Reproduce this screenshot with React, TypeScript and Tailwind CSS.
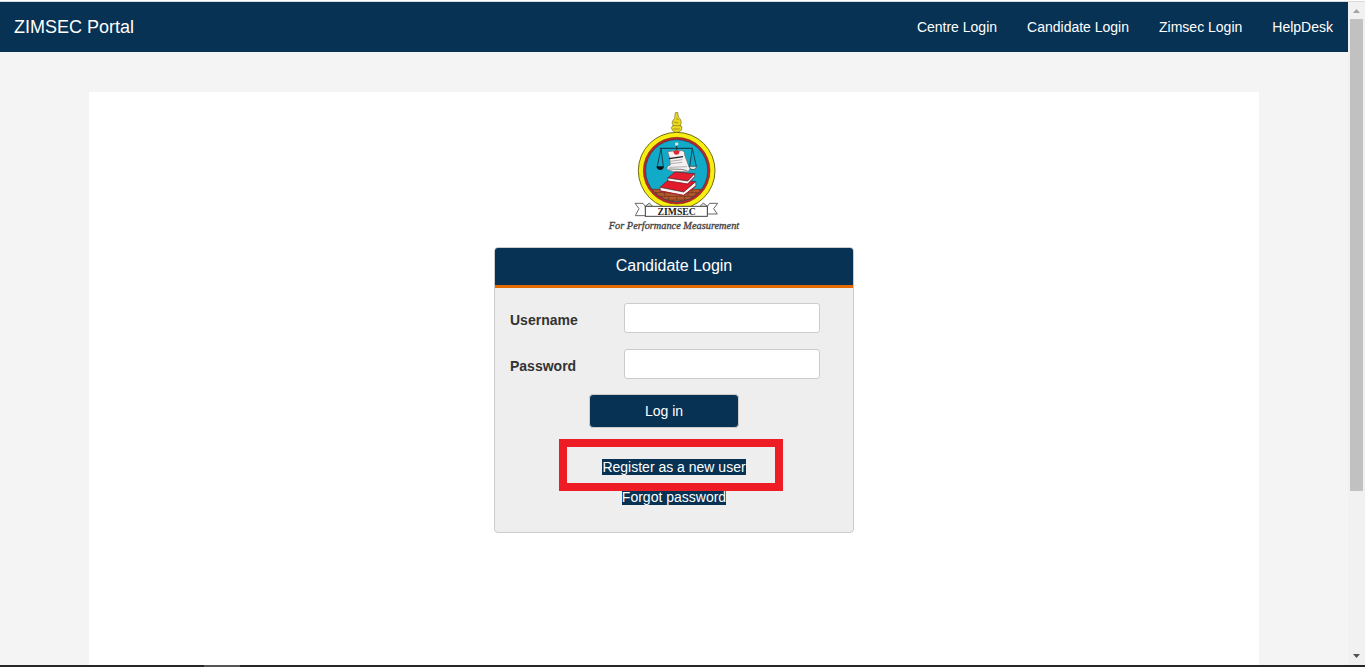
import React, { useState } from 'react';

const navLinks = ['Centre Login', 'Candidate Login', 'Zimsec Login', 'HelpDesk'];

const Crest: React.FC = () => (
  <svg width="150" height="125" viewBox="-3 21 450 375" role="img" aria-label="ZIMSEC crest">
    {/* bird on top */}
    <path
      d="M226 23l7-1 2 14 7 8 2 10-4 7 6 5-2 10-9 6h-10l-8-6-3-9 6-5-4-8 3-8 5-6z"
      fill="#ecd91c"
      stroke="#77701f"
      strokeWidth="2"
    />
    <path d="M228 41l8 3M221 51l14 3M217 62h27M219 72h20" stroke="#84791a" strokeWidth="2" />

    {/* ring */}
    <circle cx="230" cy="197" r="115" fill="#f8ee12" stroke="#716a14" strokeWidth="3" />
    <circle cx="230" cy="197" r="100" fill="#c5202b" stroke="#6b3b13" strokeWidth="2" />
    <clipPath id="disc">
      <circle cx="230" cy="197" r="93" />
    </clipPath>
    <g clipPath="url(#disc)">
      <rect x="130" y="95" width="200" height="200" fill="#12aac9" />
      <rect x="130" y="252" width="200" height="50" fill="#b4582c" />
      <path
        d="M130 253h200M130 263h200M130 274h200M130 285h200M158 253v10M182 253v10M276 253v10M300 253v10M170 263v11M194 263v11M264 263v11M288 263v11M182 274v11M206 274v11M230 274v11M254 274v11M278 274v11M194 285v11M218 285v11M242 285v11M266 285v11"
        stroke="#693018"
        strokeWidth="2"
      />
    </g>
    <circle cx="230" cy="197" r="93" fill="none" stroke="#1d4651" strokeWidth="2" />

    {/* scales */}
    <path d="M179 130h100M230 112v26" stroke="#174450" strokeWidth="4" />
    <path d="M183 130l-11 54M183 130l7 54M277 130l-8 54M277 130l12 54" fill="none" stroke="#174550" strokeWidth="3" />
    <path d="M169 184h23q-1 11-11 11t-12-11z" fill="#111" />
    <path d="M267 184h23q-1 10-11 10t-12-10z" fill="#dfe9ea" stroke="#333" strokeWidth="2" />
    <circle cx="230" cy="117" r="5" fill="#dce8e8" />

    {/* certificate scroll */}
    <path
      d="M203 140q22-4 46-3 6 4 5 13l13 36q5 3 2 9-6 9-17 5l-31 0-16-5q-7-4-2-11l8-4-2-20z"
      fill="#f5f1f1"
      stroke="#666"
      strokeWidth="2"
    />
    <path d="M211 169l36-5M213 176l34-4M208 187l53-2" stroke="#8d898d" strokeWidth="2" />
    <path d="M207 161l42-6" stroke="#1f1f1f" strokeWidth="4" />
    <path d="M206 192l38 1 18 4" fill="none" stroke="#444" strokeWidth="2" />
    <path d="M219 139q10-4 20-1l-3 9q-7 4-13 0z" fill="#e32633" />

    {/* books */}
    <path d="M180 247l27-24 80 7-36 31z" fill="#e2192b" stroke="#6e141f" strokeWidth="2" />
    <path d="M180 247l71 14 36-31 1 13-37 29-70-14z" fill="#faf5f5" stroke="#51202a" strokeWidth="2" />
    <path d="M182 258l69 13 36-28" fill="none" stroke="#b31a2b" strokeWidth="3" />
    <path d="M203 219l22-18 59 5-21 22z" fill="#e51d2f" stroke="#6e141f" strokeWidth="2" />
    <path d="M203 219l60 9 21-22v9l-21 22-59-9z" fill="#faf5f5" stroke="#51202a" strokeWidth="2" />
    <path d="M204 228l59 9 21-22" fill="none" stroke="#b31a2b" strokeWidth="2" />

    {/* ribbon */}
    <path
      d="M136 304l-7-9h-24l12 16-11 21h31zM322 304l7-9h24l-12 16 11 16h-30z"
      fill="#fff"
      stroke="#666"
      strokeWidth="3"
    />
    <path d="M136 304l12-10 9 9M322 304l-12-10-9 9" fill="#ddd" stroke="#666" strokeWidth="3" />
    <rect x="136" y="304" width="186" height="30" fill="#fff" stroke="#444" strokeWidth="3" />
    <text x="230" y="330" textAnchor="middle" fill="#222" fontSize="29" fontWeight="700" fontFamily="'Liberation Serif', serif">
      ZIMSEC
    </text>
    <text x="222" y="373" textAnchor="middle" fill="#444" stroke="#444" fontSize="31" fontStyle="italic" fontFamily="'Liberation Serif', serif">
      For Performance Measurement
    </text>
  </svg>
);

interface FieldProps {
  id: string;
  label: string;
  type: string;
  value: string;
  onChange: (value: string) => void;
}

const Field: React.FC<FieldProps> = ({ id, label, type, value, onChange }) => (
  <div className="flex items-center">
    <label htmlFor={id} className="w-[114px] pt-1 font-bold">{label}</label>
    <input
      id={id}
      type={type}
      value={value}
      onChange={(e) => onChange(e.target.value)}
      className="h-[30px] w-[196px] rounded-[3px] border border-[#ccc] bg-white px-2 outline-none"
    />
  </div>
);

const LoginCard: React.FC = () => {
  const [username, setUsername] = useState('');
  const [password, setPassword] = useState('');

  return (
    <div className="mt-2.5 w-[360px] overflow-hidden rounded border border-[#ccc] bg-[#eee]">
      <h1 className="h-10 border-b-3 border-[#e56a00] bg-[#083254] text-center text-base leading-9 text-white">
        Candidate Login
      </h1>
      <form onSubmit={(e) => e.preventDefault()} className="flex flex-col gap-[15px] px-[15px] pt-[15px]">
        <div className="flex flex-col gap-4">
          <Field id="username" label="Username" type="text" value={username} onChange={setUsername} />
          <Field id="password" label="Password" type="password" value={password} onChange={setPassword} />
        </div>
        <button
          type="submit"
          className="mr-5 h-[34px] w-[150px] self-center rounded border border-[#ccc] bg-[#083254] text-white"
        >
          Log in
        </button>
      </form>
      <div className="flex flex-col items-center gap-2.5 pt-[29px] pb-[25px]">
        <div className="relative z-10">
          <a href="#register" className="bg-[#083254] text-white">Register as a new user</a>
          <span className="pointer-events-none absolute -top-[18px] -right-[37px] -left-[43px] h-[52px] border-8 border-[#ee1c24]" />
        </div>
        <div>
          <a href="#forgot" className="bg-[#083254] text-white">Forgot password</a>
        </div>
      </div>
    </div>
  );
};

const ScrollRail: React.FC = () => (
  <div className="flex w-[17px] shrink-0 flex-col items-center bg-[#f1f1f1]" aria-hidden="true">
    <svg className="h-[17px] w-[17px]" viewBox="0 0 17 17">
      <path d="M5 11l3.5-4 3.5 4z" fill="#a3a3a3" />
    </svg>
    <div className="flex w-[13px] flex-1 flex-col">
      <div className="flex-3 bg-[#c1c1c1]" />
      <div className="flex-1" />
    </div>
    <svg className="h-[17px] w-[17px]" viewBox="0 0 17 17">
      <path d="M5 6l3.5 4 3.5-4z" fill="#505050" />
    </svg>
  </div>
);

const App: React.FC = () => {
  return (
    <div className="flex h-screen flex-col bg-white pt-px font-['Liberation_Sans',Arial,sans-serif] text-sm leading-5 text-[#333]">
      <div className="flex min-h-0 flex-1 border-t border-[#d9dcde]">
        <div className="flex min-w-0 flex-1 flex-col bg-[#f4f4f4]">
          <nav className="flex h-[50px] shrink-0 items-center justify-between bg-[#083254] pr-[15px] pl-3.5 text-white">
            <a href="#home" className="text-lg">ZIMSEC Portal</a>
            <div className="flex gap-[30px]">
              {navLinks.map(link => (
                <a key={link} href="#login">{link}</a>
              ))}
            </div>
          </nav>
          <main className="mx-auto mt-10 flex w-full max-w-[1170px] flex-1 flex-col items-center bg-white pt-5">
            <Crest />
            <LoginCard />
          </main>
        </div>
        <ScrollRail />
      </div>
      <div className="h-0.5 shrink-0 bg-[#262626] pl-[204px]">
        <div className="h-full w-9 bg-[#555]" />
      </div>
    </div>
  );
};

export default App;
